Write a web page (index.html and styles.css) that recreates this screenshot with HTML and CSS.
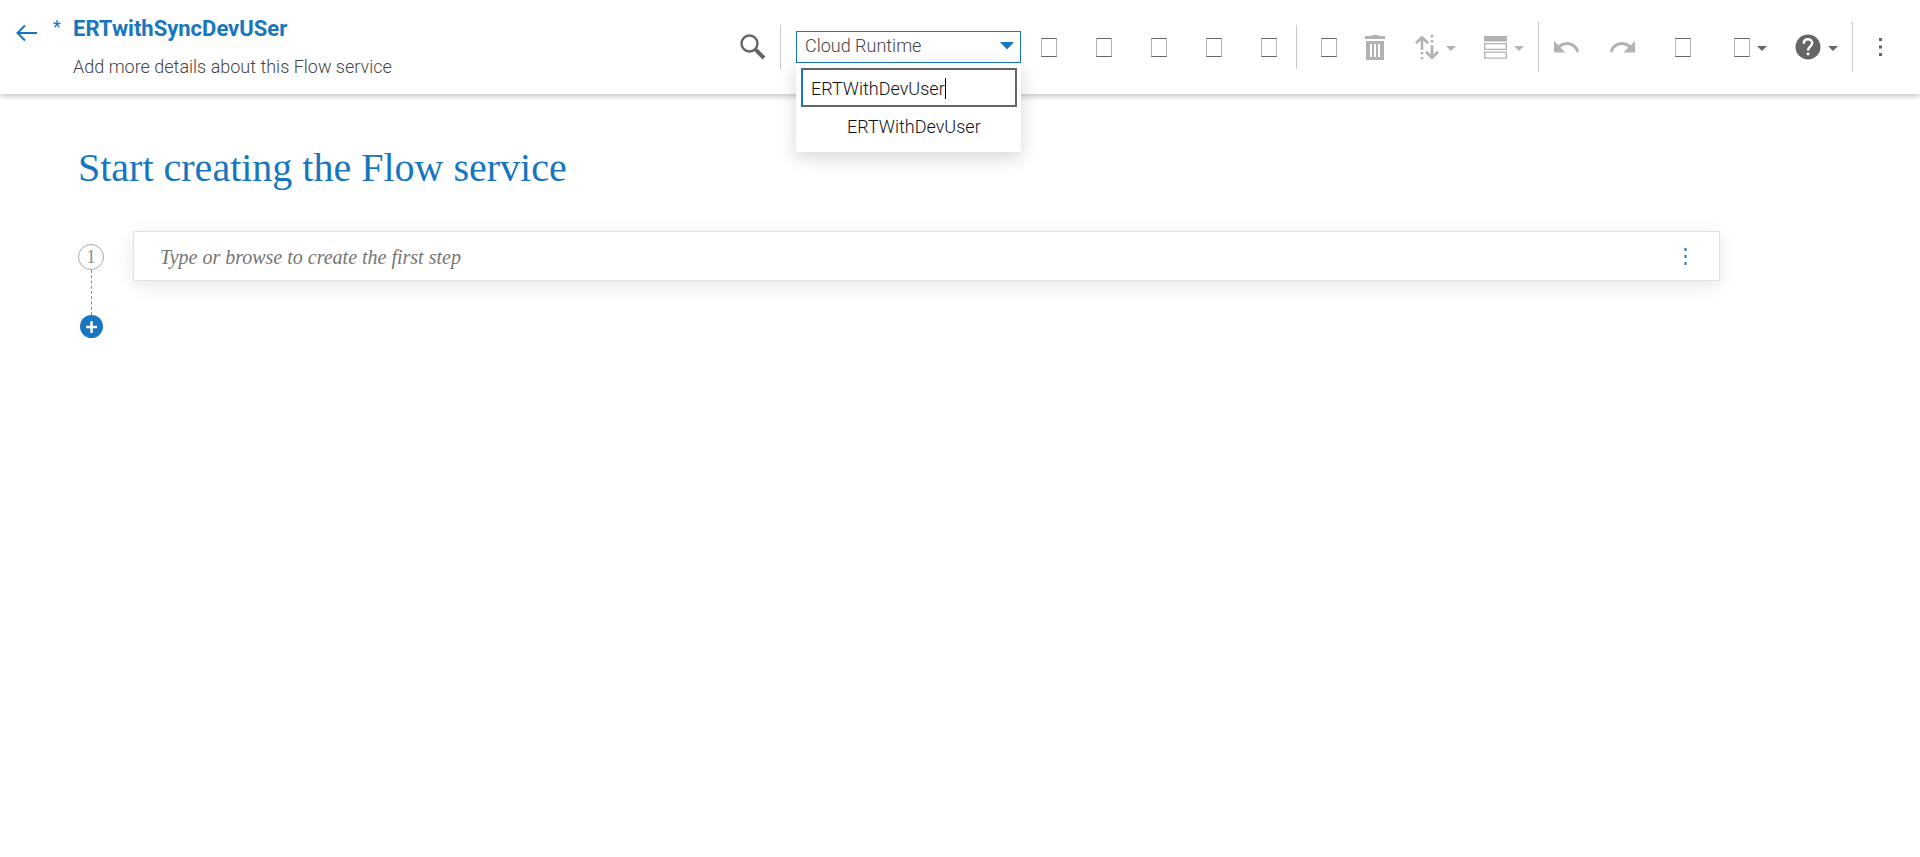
FILE: index.html
```html
<!DOCTYPE html>
<html lang="en">
<head>
<meta charset="utf-8">
<meta name="viewport" content="width=device-width, initial-scale=1">
<title>ERTwithSyncDevUSer</title>
<link rel="stylesheet" href="styles.css">
</head>
<body>
<header class="header">
  <button class="back" type="button" aria-label="Back">
    <svg width="22" height="18" viewBox="0 0 22 18" fill="none" stroke="currentColor" stroke-width="2"><path d="M21 9H2M9 1.500 1.500 9 9 16.500"/></svg>
  </button>
  <span class="unsaved">*</span>
  <div class="service">
    <h1 class="service-name">ERTwithSyncDevUSer</h1>
    <p class="service-description">Add more details about this Flow service</p>
  </div>
  <div class="toolbar">
    <button class="tool" type="button" aria-label="Search">
      <svg width="26" height="26" viewBox="0 0 26 26" fill="none" stroke="currentColor"><circle cx="9.500" cy="9.500" r="8" stroke-width="2.400"/><path d="M15 15l1.500 1.500" stroke-width="2.500"/><path d="M16 16l8 8" stroke-width="4"/></svg>
    </button>
    <span class="divider"></span>
    <div class="runtime">
      <select class="runtime-select" aria-label="Runtime"><option>Cloud Runtime</option></select>
      <svg class="runtime-arrow" width="14" height="8" viewBox="0 0 14 8"><path d="M0 0h14L7 7.500z" fill="currentColor"/></svg>
      <div class="runtime-menu">
        <div class="runtime-search">
          <input class="runtime-input" type="text" aria-label="Search runtimes" value="ERTWithDevUser">
          <span class="text-cursor"></span>
        </div>
        <button class="runtime-option" type="button">ERTWithDevUser</button>
      </div>
    </div>
    <button class="tool" type="button" aria-label="Run"><span class="glyph"></span></button>
    <button class="tool" type="button" aria-label="Debug"><span class="glyph"></span></button>
    <button class="tool" type="button" aria-label="Save"><span class="glyph"></span></button>
    <button class="tool" type="button" aria-label="Input and output"><span class="glyph"></span></button>
    <button class="tool" type="button" aria-label="Schedule"><span class="glyph"></span></button>
    <span class="divider"></span>
    <div class="edit-tools">
      <button class="tool tool-narrow" type="button" aria-label="Duplicate"><span class="glyph"></span></button>
      <button class="tool tool-narrow muted" type="button" aria-label="Delete">
        <svg width="20" height="25" viewBox="0 0 20 25"><path fill="currentColor" fill-rule="evenodd" d="M0 1h6.500V0h7v1H20v3H0zM1 6h18v19H1zM5 9v13h2V9zm4 0v13h2V9zm4 0v13h2V9z"/></svg>
      </button>
    </div>
    <button class="menu-tool muted" type="button" aria-label="Move step">
      <svg width="24" height="25" viewBox="0 0 24 25" fill="none" stroke="currentColor" stroke-width="2.600"><path d="M7 15V2.500M.9 8.200 7 2.200l6.100 6M17 10v12.500M10.900 16.800l6.100 6 6.100-6M7 17v2.500M7 22v2.500M17 0v2.500M17 5v2.500"/></svg>
      <svg class="caret" width="10" height="5" viewBox="0 0 10 5"><path d="M0 0h10L5 5z" fill="currentColor"/></svg>
    </button>
    <button class="menu-tool muted" type="button" aria-label="Layout">
      <svg width="23" height="23" viewBox="0 0 23 23"><path fill="currentColor" d="M0 0h23v5.500H0z"/><path fill="none" stroke="currentColor" stroke-width="1.300" d="M.7 7.700h21.600v5.600H.7zM.7 16.200h21.600v6H.7z"/></svg>
      <svg class="caret" width="10" height="5" viewBox="0 0 10 5"><path d="M0 0h10L5 5z" fill="currentColor"/></svg>
    </button>
    <span class="divider divider-tall"></span>
    <button class="tool muted" type="button" aria-label="Undo">
      <svg width="26" height="12" viewBox="0 0 26 12"><path fill="currentColor" d="M0 0l4.300 4.200A14 14 0 0 1 13 1c5.800 0 10.500 3.500 12.200 9.400l-2.700 1C21 6.800 17.500 4 13 4c-2.500 0-4.700.9-6.500 2.400L11.500 11.500H0z"/></svg>
    </button>
    <button class="tool muted" type="button" aria-label="Redo">
      <svg width="26" height="12" viewBox="0 0 26 12"><path fill="currentColor" d="M26 0l-4.300 4.200A14 14 0 0 0 13 1C7.200 1 2.500 4.500.8 10.400l2.700 1C5 6.800 8.500 4 13 4c2.500 0 4.700.9 6.500 2.400L14.500 11.500H26z"/></svg>
    </button>
    <button class="tool tool-wide" type="button" aria-label="Shortcuts"><span class="glyph"></span></button>
    <button class="menu-tool" type="button" aria-label="View options">
      <span class="glyph"></span>
      <svg class="caret" width="10" height="5" viewBox="0 0 10 5"><path d="M0 0h10L5 5z" fill="currentColor"/></svg>
    </button>
    <button class="menu-tool" type="button" aria-label="Help">
      <svg width="26" height="26" viewBox="0 0 26 26"><circle cx="13" cy="13" r="12.500" fill="currentColor"/><path d="M8.800 9.800C8.800 7 10.500 5.200 13 5.200s4.200 1.700 4.200 4c0 3-4.200 3.500-4.200 7.300" fill="none" stroke="#fff" stroke-width="2.500"/><path d="M11.700 18.700h2.600v2.600h-2.600z" fill="#fff"/></svg>
      <svg class="caret" width="10" height="5" viewBox="0 0 10 5"><path d="M0 0h10L5 5z" fill="currentColor"/></svg>
    </button>
    <span class="divider divider-tall"></span>
    <button class="tool" type="button" aria-label="More">
      <svg width="4" height="18" viewBox="0 0 4 18" fill="currentColor"><path d="M0 0h3v3H0zM0 7.500h3v3H0zM0 15h3v3H0z"/></svg>
    </button>
  </div>
</header>
<main class="main">
  <h2 class="heading">Start creating the Flow service</h2>
  <div class="step-row">
    <div class="rail">
      <span class="step-number">1</span>
      <span class="connector"></span>
      <button class="add-step" type="button" aria-label="Add step">
        <svg width="11" height="12" viewBox="0 0 11 12"><path d="M5.500 0v12M0 6h11" stroke="currentColor" stroke-width="2.400"/></svg>
      </button>
    </div>
    <div class="step-card">
      <input class="step-input" type="text" aria-label="Step 1" placeholder="Type or browse to create the first step">
      <button class="step-more" type="button" aria-label="Step options">
        <svg width="3" height="17" viewBox="0 0 3 17" fill="currentColor"><path d="M.5 0h2v3h-2zM.5 7h2v3h-2zM.5 14h2v3h-2z"/></svg>
      </button>
    </div>
  </div>
</main>
</body>
</html>
```
FILE: styles.css
```css
* {
  box-sizing: border-box;
}

body {
  margin: 0;
  min-height: 100vh;
  background: #fff;
  color: #666;
  font-family: Roboto, sans-serif;
  font-size: 18px;
  font-weight: 300;
}

button {
  margin: 0;
  padding: 0;
  border: 0;
  background: none;
  color: inherit;
  font: inherit;
  cursor: pointer;
}

svg {
  display: block;
  flex: none;
}

.header {
  display: flex;
  align-items: flex-start;
  height: 94px;
  padding: 0 12px 0 16px;
  background: #fff;
  box-shadow: 0 2px 6px rgba(0, 0, 0, 0.25);
}

.back {
  margin-top: 24px;
  color: #1776bf;
}

.unsaved {
  width: 20px;
  margin: 15px 0 0 15px;
  color: #1776bf;
  font-weight: 400;
  line-height: 24px;
}

.service {
  flex: 1;
  min-width: 0;
}

.service-name {
  margin: 16px 0 0;
  color: #1776bf;
  font-size: 22px;
  font-weight: 700;
  line-height: 26px;
}

.service-description {
  margin: 13px 0 0;
  color: #444;
  line-height: 24px;
}

.toolbar {
  display: flex;
  align-items: center;
  height: 94px;
}

.tool {
  display: flex;
  align-items: center;
  justify-content: center;
  width: 55px;
  height: 44px;
}

.tool-narrow {
  width: 46px;
}

.tool-wide {
  width: 68px;
  margin-right: 3px;
}

.menu-tool {
  display: flex;
  align-items: center;
  gap: 7px;
  height: 44px;
  padding: 0 14px;
}

.edit-tools {
  display: flex;
  padding: 0 3px 0 9px;
}

.muted {
  color: #b2b2b2;
}

.glyph {
  width: 16px;
  height: 19px;
  border: 1px solid #b5b5b5;
  border-top-color: #666;
  border-bottom-color: #666;
}

.caret {
  margin-top: 2px;
}

.divider {
  width: 1px;
  height: 44px;
  background: #c8c8c8;
}

.divider-tall {
  height: 50px;
}

.runtime {
  position: relative;
  width: 225px;
  margin-left: 15px;
}

.runtime-select {
  display: block;
  width: 100%;
  height: 32px;
  padding: 0 32px 3px 8px;
  border: 1px solid #1776bf;
  border-radius: 0;
  appearance: none;
  background: #fff;
  color: #444;
  font: inherit;
}

.runtime-arrow {
  position: absolute;
  top: 11px;
  right: 7px;
  color: #1776bf;
}

.runtime-menu {
  position: absolute;
  z-index: 1;
  top: 100%;
  left: 0;
  width: 100%;
  padding: 5px 4px 9px 5px;
  background: #fff;
  box-shadow: 0 6px 18px rgba(0, 0, 0, 0.16);
}

.runtime-search {
  position: relative;
}

.runtime-input {
  display: block;
  width: 100%;
  height: 39px;
  padding: 2px 9px 0;
  border: 1px solid #666;
  border-radius: 0;
  outline: 1px solid #1776bf;
  outline-offset: -2px;
  background: #fff;
  color: #111;
  font: inherit;
}

.text-cursor {
  position: absolute;
  top: 10px;
  left: 144px;
  width: 1px;
  height: 21px;
  background: #000;
}

.runtime-option {
  display: block;
  width: 100%;
  height: 36px;
  padding: 2px 0 0 46px;
  color: #111;
  text-align: left;
}

.main {
  padding: 51px 200px 0 78px;
}

.heading {
  margin: 0;
  color: #1776bf;
  font-family: "Liberation Serif", serif;
  font-size: 40px;
  font-weight: 400;
  line-height: 46px;
}

.step-row {
  display: flex;
  align-items: flex-start;
  gap: 29px;
  margin-top: 40px;
}

.rail {
  display: flex;
  flex-direction: column;
  align-items: center;
  width: 26px;
  padding-top: 13px;
}

.step-number {
  width: 26px;
  height: 26px;
  border: 1px solid #aaa;
  border-radius: 50%;
  color: #888;
  font-family: "Liberation Serif", serif;
  font-weight: 400;
  line-height: 25px;
  text-align: center;
}

.connector {
  height: 45px;
  border-left: 1px dashed #888;
}

.add-step {
  display: flex;
  align-items: center;
  justify-content: center;
  width: 23px;
  height: 23px;
  border-radius: 50%;
  background: #1776bf;
  color: #fff;
}

.step-card {
  display: flex;
  flex: 1;
  align-items: center;
  height: 50px;
  padding: 0 32px 0 26px;
  border: 1px solid #e1e1e1;
  background: #fff;
  box-shadow: 0 4px 18px rgba(0, 0, 0, 0.1);
}

.step-input {
  flex: 1;
  min-width: 0;
  height: 40px;
  padding: 3px 0 0;
  border: 0;
  outline: 0;
  background: none;
  color: #333;
  font-family: "Liberation Serif", serif;
  font-size: 20px;
  font-style: italic;
  font-weight: 400;
}

.step-input::placeholder {
  color: #757575;
  opacity: 1;
}

.step-more {
  color: #1776bf;
}
```
